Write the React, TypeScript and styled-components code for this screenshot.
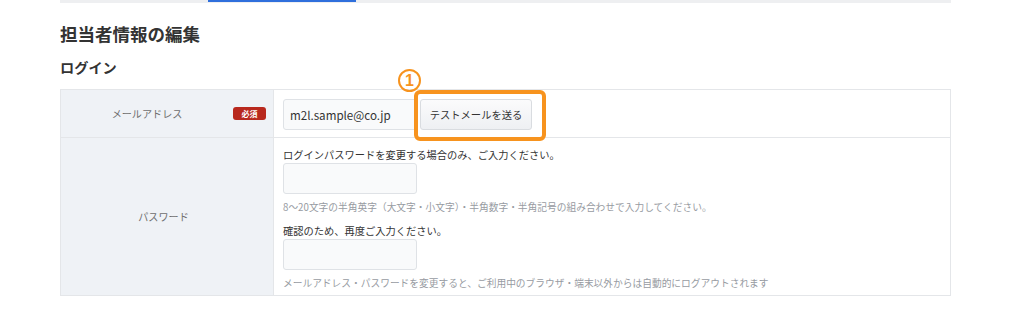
import { FC } from "react";
import styled, { createGlobalStyle } from "styled-components";

const GlobalStyle = createGlobalStyle`
  html, body {
    margin: 0;
    padding: 0;
    background: #ffffff;
  }
  body {
    font-family: "Noto Sans CJK JP", "Noto Sans", sans-serif;
    color: #333333;
  }
`;

const App: FC = () => {
  return (
    <>
      <GlobalStyle />
      <Page>
        <TabBar>
          <ActiveTab />
        </TabBar>
        <Title>担当者情報の編集</Title>
        <SubTitle>ログイン</SubTitle>
        <Table>
          <LabelCell>
            <LabelText>メールアドレス</LabelText>
            <Required>必須</Required>
          </LabelCell>
          <ValueCell>
            <InlineFields>
              <TextInput value="m2l.sample@co.jp" readOnly />
              <ButtonWrap>
                <SendButton>テストメールを送る</SendButton>
                <Highlight />
                <StepMark>1</StepMark>
              </ButtonWrap>
            </InlineFields>
          </ValueCell>
          <LabelCell last>
            <LabelText>パスワード</LabelText>
          </LabelCell>
          <ValueCell last>
            <Caption>ログインパスワードを変更する場合のみ、ご入力ください。</Caption>
            <TextInput type="password" />
            <Hint>
              8〜20文字の半角英字（大文字・小文字）・半角数字・半角記号の組み合わせで入力してください。
            </Hint>
            <Caption spaced>確認のため、再度ご入力ください。</Caption>
            <TextInput type="password" />
            <Hint>
              メールアドレス・パスワードを変更すると、ご利用中のブラウザ・端末以外からは自動的にログアウトされます
            </Hint>
          </ValueCell>
        </Table>
      </Page>
    </>
  );
};

const Page = styled.div`
  width: 891px;
  margin-left: 60px;
  display: flex;
  flex-direction: column;
`;

const TabBar = styled.div`
  height: 3px;
  background: #eeeff1;
  display: flex;
`;

const ActiveTab = styled.div`
  margin-left: 148px;
  width: 148px;
  height: 2px;
  background: #2f6fdc;
`;

const Title = styled.h1`
  margin: 18px 0 0;
  font-size: 17.5px;
  line-height: 25px;
  font-weight: 700;
  color: #333333;
`;

const SubTitle = styled.h2`
  margin: 11px 0 0;
  font-size: 14.2px;
  line-height: 20px;
  font-weight: 700;
  color: #333333;
`;

const Table = styled.div`
  margin-top: 12px;
  display: grid;
  grid-template-columns: 213px 1fr;
  border: 1px solid #e4e6e9;
`;

const LabelCell = styled.div<{ last?: boolean }>`
  display: flex;
  align-items: center;
  padding-right: 7px;
  background: #eff2f6;
  border-right: 1px solid #e4e6e9;
  border-bottom: ${(p) => (p.last ? "none" : "1px solid #e4e6e9")};
`;

const LabelText = styled.span`
  flex: 1;
  text-align: center;
  font-size: 10.1px;
  color: #6e6e6e;
`;

const Required = styled.span`
  width: 33px;
  height: 13px;
  border-radius: 3px;
  background: #b8281d;
  color: #ffffff;
  font-size: 8px;
  font-weight: 700;
  line-height: 13px;
  text-align: center;
`;

const ValueCell = styled.div<{ last?: boolean }>`
  display: flex;
  flex-direction: column;
  align-items: flex-start;
  padding: ${(p) => (p.last ? "9px 9px 5px" : "9px 9px 7px")};
  border-bottom: ${(p) => (p.last ? "none" : "1px solid #e4e6e9")};
`;

const InlineFields = styled.div`
  display: flex;
  align-items: flex-start;
  gap: 3px;
`;

const TextInput = styled.input`
  box-sizing: border-box;
  width: 134px;
  height: 31px;
  margin: 0;
  padding: 0 6px;
  border: 1px solid #dfe2e6;
  border-radius: 3px;
  background: #f9fafb;
  font-family: "Noto Sans CJK JP", sans-serif;
  font-size: 11.6px;
  color: #333333;
  outline: none;
`;

const ButtonWrap = styled.div`
  position: relative;
`;

const SendButton = styled.button`
  box-sizing: border-box;
  width: 112px;
  height: 31px;
  margin: 0;
  padding: 0;
  border: 1px solid #d9dce0;
  border-radius: 3px;
  background: linear-gradient(#fbfbfc, #eef0f3);
  font-family: "Noto Sans CJK JP", sans-serif;
  font-size: 10.3px;
  color: #333333;
`;

const Highlight = styled.div`
  position: absolute;
  left: -6px;
  top: -9px;
  width: 132px;
  height: 51px;
  box-sizing: border-box;
  border: 4px solid #f7931e;
  border-radius: 6px;
  pointer-events: none;
`;

const StepMark = styled.div`
  position: absolute;
  left: -22px;
  top: -30px;
  width: 23px;
  height: 23px;
  box-sizing: border-box;
  border: 2px solid #f7931e;
  border-radius: 50%;
  display: flex;
  align-items: center;
  justify-content: center;
  color: #f7931e;
  font-family: "Liberation Sans", sans-serif;
  font-size: 16px;
  font-weight: 700;
  line-height: 1;
`;

const Caption = styled.div<{ spaced?: boolean }>`
  margin-top: ${(p) => (p.spaced ? "9px" : "0")};
  font-size: 10.25px;
  line-height: 16px;
  color: #333333;
`;

const Hint = styled.div`
  margin-top: 6px;
  font-size: 9.72px;
  line-height: 14px;
  color: #979ba2;
`;

export default App;
